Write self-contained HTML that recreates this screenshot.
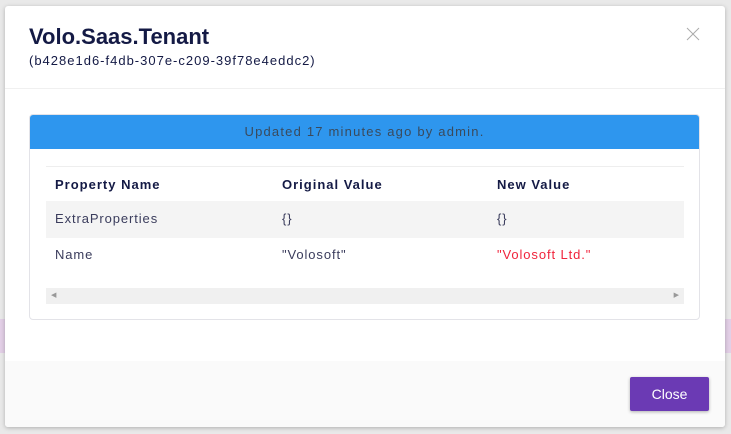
<!DOCTYPE html>
<html><head><style>
*{margin:0;padding:0;box-sizing:border-box}
body{width:731px;height:434px;background:#e9e9e9;position:relative;overflow:hidden;font-family:"Liberation Sans",sans-serif;color:#1c1e4a}
.band{position:absolute;left:0;right:0;top:319px;height:34px;background:#e2cfe6}
.modal{position:absolute;left:5px;top:6px;width:720px;height:421px;background:#fff;border-radius:3px;box-shadow:0 1px 4px rgba(0,0,0,.25);overflow:hidden}
.title{position:absolute;left:24px;top:18px;font-size:22px;font-weight:bold;color:#141a45}
.sub{position:absolute;left:24px;top:47px;font-size:13px;color:#141a45;letter-spacing:1px}
.x{position:absolute;left:681px;top:21px}
.hl{position:absolute;left:0;right:0;top:82px;border-top:1px solid #f0f0f0}
.card{position:absolute;left:24px;top:108px;width:671px;height:206px;border:1px solid #e3e3e8;border-radius:4px}
.bar{position:absolute;left:0;top:0;width:669px;height:34px;background:#2e96ee;color:#3a4a5c;font-size:13px;text-align:center;line-height:34px;border-radius:3px 3px 0 0;letter-spacing:1.2px}
.il{position:absolute;left:16px;top:51px;width:638px;border-top:1px solid #eee}
.t{position:absolute;font-size:13px;color:#3a3c5c;letter-spacing:0.9px}
.h{font-weight:bold;color:#141a45;letter-spacing:1px}
.r1{position:absolute;left:16px;top:86px;width:638px;height:37px;background:#f4f4f4}
.sb{position:absolute;left:16px;top:173px;width:638px;height:16px;background:#f0f0f0;font-size:7px;color:#999}
.foot{position:absolute;left:0;right:0;top:355px;height:66px;background:#fafafa}
.btn{position:absolute;left:625px;top:371px;width:79px;height:34px;background:#6b3ab4;color:#fff;font-size:14px;text-align:center;line-height:34px;border-radius:2px;box-shadow:0 1px 3px rgba(0,0,0,.3)}
</style></head><body>
<div class="band"></div>
<div class="modal">
<div class="title">Volo.Saas.Tenant</div>
<div class="sub">(b428e1d6-f4db-307e-c209-39f78e4eddc2)</div>
<svg class="x" width="14" height="14" viewBox="0 0 14 14"><path d="M1 1L13 13M13 1L1 13" stroke="#aaa" stroke-width="1"/></svg>
<div class="hl"></div>
<div class="card">
<div class="bar">Updated 17 minutes ago by admin.</div>
<div class="il"></div>
<div class="t h" style="left:25px;top:62px">Property Name</div>
<div class="t h" style="left:252px;top:62px">Original Value</div>
<div class="t h" style="left:467px;top:62px">New Value</div>
<div class="r1"></div>
<div class="t" style="left:25px;top:96px">ExtraProperties</div>
<div class="t" style="left:252px;top:96px">{}</div>
<div class="t" style="left:467px;top:96px">{}</div>
<div class="t" style="left:25px;top:132px">Name</div>
<div class="t" style="left:252px;top:132px">"Volosoft"</div>
<div class="t" style="left:467px;top:132px;color:#f0243c">"Volosoft Ltd."</div>
<div class="sb"><span style="position:absolute;left:5px;top:3px">◀</span><span style="position:absolute;right:5px;top:3px">▶</span></div>
</div>
<div class="foot"></div>
<div class="btn">Close</div>
</div>
</body></html>
